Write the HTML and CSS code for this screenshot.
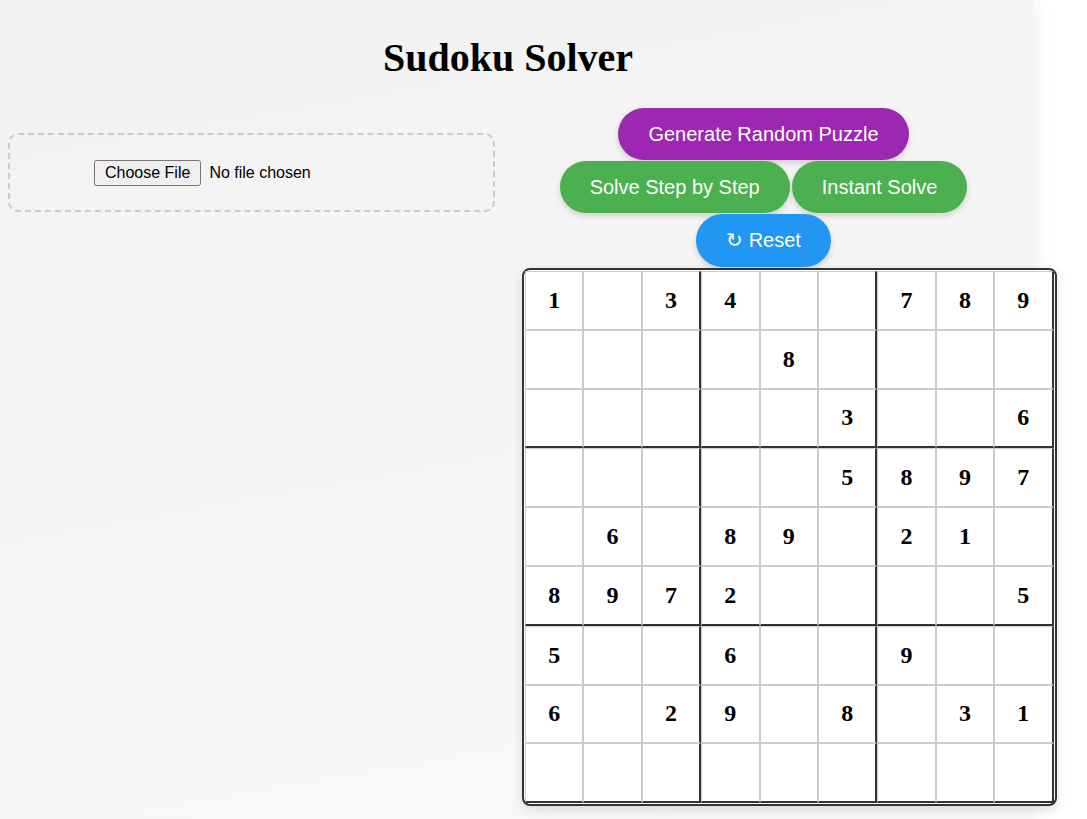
FILE: index.html
```html
<!DOCTYPE html>
<html lang="en">
<head>
<meta charset="utf-8">
<title>Sudoku Solver</title>
<link rel="stylesheet" href="styles.css">
</head>
<body>
<div class="container">
  <h1 class="title">Sudoku Solver</h1>
  <div class="main">
    <div class="left">
      <div class="upload">
        <input type="file" class="file-input">
      </div>
    </div>
    <div class="right">
      <div class="btn-row">
        <button class="btn btn-purple">Generate Random Puzzle</button>
      </div>
      <div class="btn-row">
        <button class="btn btn-green">Solve Step by Step</button>
        <button class="btn btn-green">Instant Solve</button>
      </div>
      <div class="btn-row">
        <button class="btn btn-blue">↻ Reset</button>
      </div>
      <div class="board">
        <div class="cell">1</div><div class="cell"></div><div class="cell c3">3</div><div class="cell">4</div><div class="cell"></div><div class="cell c3"></div><div class="cell">7</div><div class="cell">8</div><div class="cell c3">9</div>
        <div class="cell"></div><div class="cell"></div><div class="cell c3"></div><div class="cell"></div><div class="cell">8</div><div class="cell c3"></div><div class="cell"></div><div class="cell"></div><div class="cell c3"></div>
        <div class="cell r3"></div><div class="cell r3"></div><div class="cell r3 c3"></div><div class="cell r3"></div><div class="cell r3"></div><div class="cell r3 c3">3</div><div class="cell r3"></div><div class="cell r3"></div><div class="cell r3 c3">6</div>
        <div class="cell"></div><div class="cell"></div><div class="cell c3"></div><div class="cell"></div><div class="cell"></div><div class="cell c3">5</div><div class="cell">8</div><div class="cell">9</div><div class="cell c3">7</div>
        <div class="cell"></div><div class="cell">6</div><div class="cell c3"></div><div class="cell">8</div><div class="cell">9</div><div class="cell c3"></div><div class="cell">2</div><div class="cell">1</div><div class="cell c3"></div>
        <div class="cell r3">8</div><div class="cell r3">9</div><div class="cell r3 c3">7</div><div class="cell r3">2</div><div class="cell r3"></div><div class="cell r3 c3"></div><div class="cell r3"></div><div class="cell r3"></div><div class="cell r3 c3">5</div>
        <div class="cell">5</div><div class="cell"></div><div class="cell c3"></div><div class="cell">6</div><div class="cell"></div><div class="cell c3"></div><div class="cell">9</div><div class="cell"></div><div class="cell c3"></div>
        <div class="cell">6</div><div class="cell"></div><div class="cell c3">2</div><div class="cell">9</div><div class="cell"></div><div class="cell c3">8</div><div class="cell"></div><div class="cell">3</div><div class="cell c3">1</div>
        <div class="cell r3"></div><div class="cell r3"></div><div class="cell r3 c3"></div><div class="cell r3"></div><div class="cell r3"></div><div class="cell r3 c3"></div><div class="cell r3"></div><div class="cell r3"></div><div class="cell r3 c3"></div>
      </div>
    </div>
  </div>
</div>
</body>
</html>
```

FILE: styles.css
```css
html, body {
  margin: 0;
  padding: 0;
  background: #ffffff;
}

body {
  font-family: "Liberation Serif", "Times New Roman", serif;
  overflow: hidden;
}

.container {
  width: 1033px;
  min-height: 819px;
  box-sizing: border-box;
  padding: 35px 0 0 8px;
  background: linear-gradient(170deg, #f2f2f2 0%, #f5f5f5 50%, #f9f9f9 100%);
  box-shadow: 0 0 20px rgba(0, 0, 0, 0.08);
}

.title {
  margin: 0 25px 27px 0;
  font-family: "Liberation Serif", "Times New Roman", serif;
  font-size: 40px;
  font-weight: bold;
  line-height: 46px;
  text-align: center;
  color: #000;
}

.main {
  display: flex;
  align-items: flex-start;
  gap: 27px;
}

.left {
  width: 487px;
  padding-top: 25px;
}

.upload {
  border: 2px dashed #cccccc;
  border-radius: 10px;
  box-sizing: border-box;
  height: 79px;
  padding: 25px 0 0 84px;
}

.file-input {
  font-family: "Liberation Sans", Arial, sans-serif;
  font-size: 16px;
  color: #000;
}

.file-input::file-selector-button {
  font-family: "Liberation Sans", Arial, sans-serif;
  font-size: 16px;
  padding: 2px 9px;
  margin-right: 8px;
}

.right {
  width: 483px;
  display: flex;
  flex-direction: column;
  gap: 1px;
}

.btn-row {
  display: flex;
  justify-content: center;
  gap: 2px;
}

.btn {
  font-family: "Liberation Sans", Arial, sans-serif;
  font-size: 20px;
  line-height: 22px;
  padding: 15px 30px;
  border: none;
  border-radius: 30px;
  color: #ffffff;
  box-shadow: 0 3px 6px rgba(0, 0, 0, 0.15);
  cursor: pointer;
}

.btn-purple { background: #9c27b0; }
.btn-green { background: #4caf50; }
.btn-blue { background: #2196f3; padding-top: 15px; padding-bottom: 16px; }

.board {
  align-self: flex-start;
  display: grid;
  grid-template-columns: repeat(9, auto);
  border: 2px solid #333333;
  border-radius: 8px;
  padding: 1px;
  background: #ffffff;
  box-shadow: 0 4px 12px rgba(0, 0, 0, 0.12);
}

.cell {
  width: 56.4px;
  height: 56.8px;
  border: 1px solid #cccccc;
  display: flex;
  align-items: center;
  justify-content: center;
  font-family: "Liberation Serif", "Times New Roman", serif;
  font-size: 24px;
  font-weight: bold;
  color: #000;
}

.cell.c3 { border-right: 2px solid #333333; }
.cell.r3 { border-bottom: 2px solid #333333; }
```
